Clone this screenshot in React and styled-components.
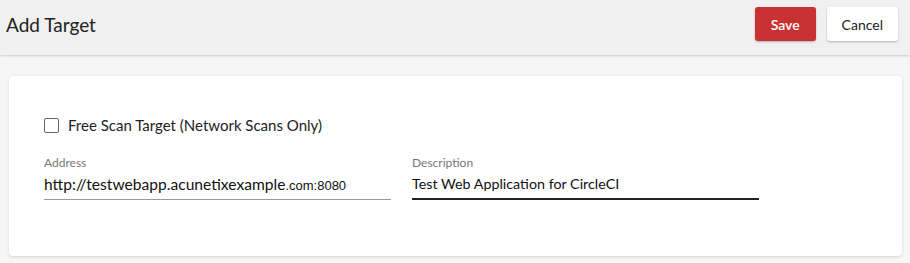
import React from 'react';
import styled, { createGlobalStyle } from 'styled-components';

const GlobalStyle = createGlobalStyle`
	html, body {
		margin: 0;
		padding: 0;
		background: #f6f6f6;
		font-family: Lato, "Noto Sans", sans-serif;
		color: #222;
	}
`;

const Page = styled.div`
	width: 910px;
	height: 263px;
	background: #f6f6f6;
	overflow: hidden;
`;

const Header = styled.div`
	height: 55px;
	box-sizing: border-box;
	background: #f0f0f0;
	display: flex;
	align-items: center;
	padding: 0 12px 7px 6px;
	box-shadow: 0 1px 2px rgba(0,0,0,0.18);
	position: relative;
`;

const Title = styled.h1`
	margin: 0;
	flex-grow: 1;
	font-size: 19px;
	font-weight: 400;
	color: #222;
`;

const Button = styled.button`
	height: 34px;
	padding: 0 ${p => p.$pad || 17}px;
	margin-left: ${p => p.$gap || 0}px;
	border: none;
	border-radius: 3px;
	font-family: inherit;
	font-size: 14px;
	font-weight: ${p => p.$primary ? 600 : 400};
	background: ${p => p.$primary ? '#c93232' : '#ffffff'};
	color: ${p => p.$primary ? '#ffffff' : '#222'};
	box-shadow: 0 1px 2px rgba(0,0,0,0.25);
`;

const Body = styled.div`
	padding: 21px 8px 0 9px;
`;

const Card = styled.div`
	height: 180px;
	box-sizing: border-box;
	background: #fff;
	border-radius: 4px;
	box-shadow: 0 1px 3px rgba(0,0,0,0.14);
	padding: 40px 35px 0 35px;
`;

const CheckRow = styled.label`
	display: flex;
	align-items: center;
	font-size: 15px;
	color: #222;
`;

const Box = styled.span`
	width: 13px;
	height: 13px;
	border: 1.5px solid #666;
	border-radius: 2px;
	margin-right: 9px;
`;

const Fields = styled.div`
	display: flex;
	gap: 21px;
	margin-top: 21px;
`;

const Field = styled.div`
	width: 347px;
`;

const Label = styled.div`
	font-size: 12px;
	color: #777;
	margin-bottom: 5px;
`;

const Value = styled.div`
	font-size: ${p => p.$size || 15}px;
	color: #111;
	padding-bottom: 6px;
	border-bottom: ${p => p.$active ? '2px solid #222' : '1px solid #999'};
`;

const Small = styled.span`
	font-family: "Liberation Sans", Arial, sans-serif;
	font-size: 13px;
`;

export default function App() {
	return (
		<Page>
			<GlobalStyle />
			<Header>
				<Title>Add Target</Title>
				<Button $primary $pad={16}>Save</Button>
				<Button $gap={11} $pad={15}>Cancel</Button>
			</Header>
			<Body>
				<Card>
					<CheckRow>
						<Box />
						Free Scan Target (Network Scans Only)
					</CheckRow>
					<Fields>
						<Field>
							<Label>Address</Label>
							<Value $size={15.6}>http://testwebapp.acunetixexample<Small>.com:8080</Small></Value>
						</Field>
						<Field>
							<Label>Description</Label>
							<Value $active $size={14.3}>Test Web Application for CircleCI</Value>
						</Field>
					</Fields>
				</Card>
			</Body>
		</Page>
	);
}
